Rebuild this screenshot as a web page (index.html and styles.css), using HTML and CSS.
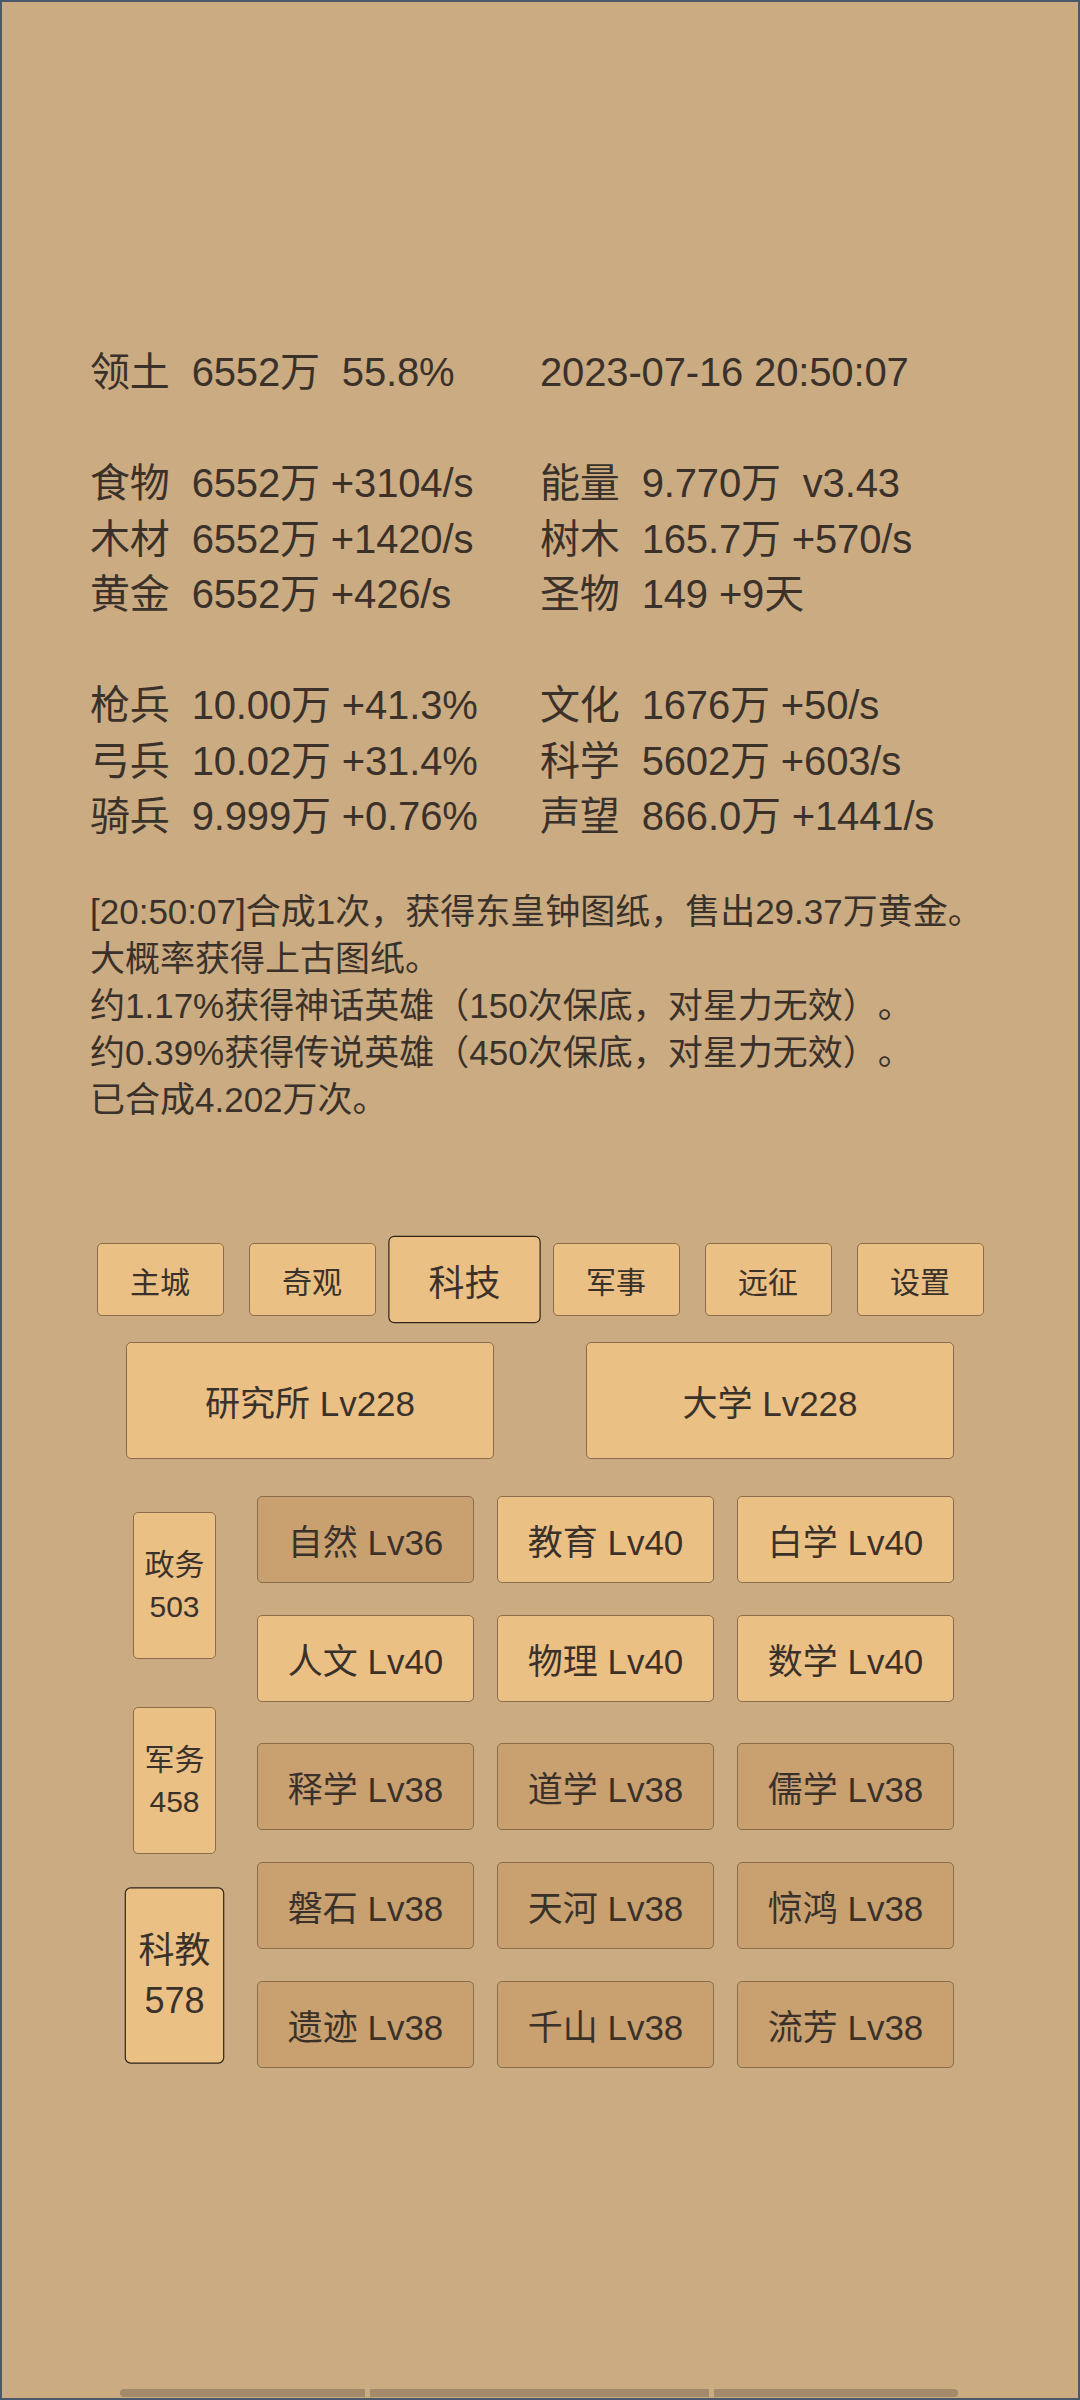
FILE: index.html
```html
<!DOCTYPE html>
<html lang="zh-CN">
<head>
    <meta charset="UTF-8">
    <meta name="viewport" content="width=device-width, initial-scale=1.0">
    <title>科技</title>
    <link rel="stylesheet" href="styles.css">
</head>
<body>
    <div class="screen">
        <div class="stats">
            <div class="stats-col">
                <div class="line">领土  6552万  55.8%</div>
                <div class="line"></div>
                <div class="line">食物  6552万 +3104/s</div>
                <div class="line">木材  6552万 +1420/s</div>
                <div class="line">黄金  6552万 +426/s</div>
                <div class="line"></div>
                <div class="line">枪兵  10.00万 +41.3%</div>
                <div class="line">弓兵  10.02万 +31.4%</div>
                <div class="line">骑兵  9.999万 +0.76%</div>
            </div>
            <div class="stats-col">
                <div class="line">2023-07-16 20:50:07</div>
                <div class="line"></div>
                <div class="line">能量  9.770万  v3.43</div>
                <div class="line">树木  165.7万 +570/s</div>
                <div class="line">圣物  149 +9天</div>
                <div class="line"></div>
                <div class="line">文化  1676万 +50/s</div>
                <div class="line">科学  5602万 +603/s</div>
                <div class="line">声望  866.0万 +1441/s</div>
            </div>
        </div>

        <div class="log">
            <div>[20:50:07]合成1次，获得东皇钟图纸，售出29.37万黄金。</div>
            <div>大概率获得上古图纸。</div>
            <div>约1.17%获得神话英雄（150次保底，对星力无效）。</div>
            <div>约0.39%获得传说英雄（450次保底，对星力无效）。</div>
            <div>已合成4.202万次。</div>
        </div>

        <nav class="tabs">
            <div class="tab">主城</div>
            <div class="tab">奇观</div>
            <div class="tab active">科技</div>
            <div class="tab">军事</div>
            <div class="tab">远征</div>
            <div class="tab">设置</div>
        </nav>

        <div class="buildings">
            <div class="building">研究所 Lv228</div>
            <div class="building">大学 Lv228</div>
        </div>

        <div class="tech">
            <div class="side">
                <div class="side-btn">政务<br>503</div>
                <div class="side-btn">军务<br>458</div>
                <div class="side-btn active">科教<br>578</div>
            </div>
            <div class="grid">
                <div class="cell dark">自然 Lv36</div>
                <div class="cell">教育 Lv40</div>
                <div class="cell">白学 Lv40</div>
                <div class="cell">人文 Lv40</div>
                <div class="cell">物理 Lv40</div>
                <div class="cell">数学 Lv40</div>
                <div class="cell dark group">释学 Lv38</div>
                <div class="cell dark group">道学 Lv38</div>
                <div class="cell dark group">儒学 Lv38</div>
                <div class="cell dark">磐石 Lv38</div>
                <div class="cell dark">天河 Lv38</div>
                <div class="cell dark">惊鸿 Lv38</div>
                <div class="cell dark">遗迹 Lv38</div>
                <div class="cell dark">千山 Lv38</div>
                <div class="cell dark">流芳 Lv38</div>
            </div>
        </div>

        <div class="scrollbar">
            <span></span>
            <span></span>
            <span></span>
        </div>
    </div>
</body>
</html>
```

FILE: styles.css
```css
body {
    margin: 0;
    padding: 0;
    font-family: "Liberation Sans", "Noto Sans CJK SC", sans-serif;
    color: #3a322a;
    text-spacing-trim: space-all;
}
.screen {
    box-sizing: border-box;
    width: 1080px;
    height: 2400px;
    border: 2px solid #4b596d;
    background-color: #cbab82;
    display: flex;
    flex-direction: column;
}
.stats {
    display: flex;
    margin-top: 343px;
    padding-left: 88px;
    font-size: 40px;
    letter-spacing: -0.15px;
}
.stats-col {
    width: 450px;
}
.line {
    height: 55.5px;
    line-height: 55.5px;
    white-space: pre;
}
.log {
    margin-top: 43.5px;
    padding-left: 88px;
    font-size: 35px;
    line-height: 47px;
    white-space: nowrap;
}
.tabs {
    display: flex;
    justify-content: center;
    gap: 25px;
    margin-top: 120px;
}
.tab, .building, .cell, .side-btn {
    box-sizing: border-box;
    display: flex;
    align-items: center;
    justify-content: center;
    text-align: center;
    background-color: #ebc085;
    border: 1.5px solid #8b6d4b;
    border-radius: 5px;
}
.tab {
    width: 127px;
    height: 73px;
    font-size: 30px;
}
.tab.active, .side-btn.active {
    transform: scale(1.2);
    border-color: #2f251b;
}
.buildings {
    display: flex;
    justify-content: center;
    gap: 92px;
    margin-top: 26px;
}
.building {
    width: 368px;
    height: 117px;
    font-size: 35px;
}
.tech {
    display: flex;
    align-items: flex-start;
    margin-top: 37px;
    padding-left: 131px;
}
.side {
    display: flex;
    flex-direction: column;
    gap: 48px;
    width: 83px;
    margin-top: 16px;
    margin-right: 41px;
}
.side-btn {
    height: 147px;
    font-size: 30px;
    line-height: 42px;
}
.grid {
    display: grid;
    grid-template-columns: repeat(3, 217px);
    column-gap: 23px;
    row-gap: 32px;
}
.cell {
    height: 87px;
    font-size: 35px;
}
.cell.dark {
    background-color: #c9a06f;
}
.cell.group {
    margin-top: 8.5px;
}
.scrollbar {
    display: flex;
    gap: 5px;
    margin-top: auto;
    margin-bottom: 1px;
    padding-left: 118px;
}
.scrollbar span {
    height: 8px;
    background-color: #a38a6b;
}
.scrollbar span:nth-child(1) {
    width: 245px;
    border-radius: 4px 0 0 4px;
}
.scrollbar span:nth-child(2) {
    width: 339px;
}
.scrollbar span:nth-child(3) {
    width: 244px;
    border-radius: 0 4px 4px 0;
}
```
